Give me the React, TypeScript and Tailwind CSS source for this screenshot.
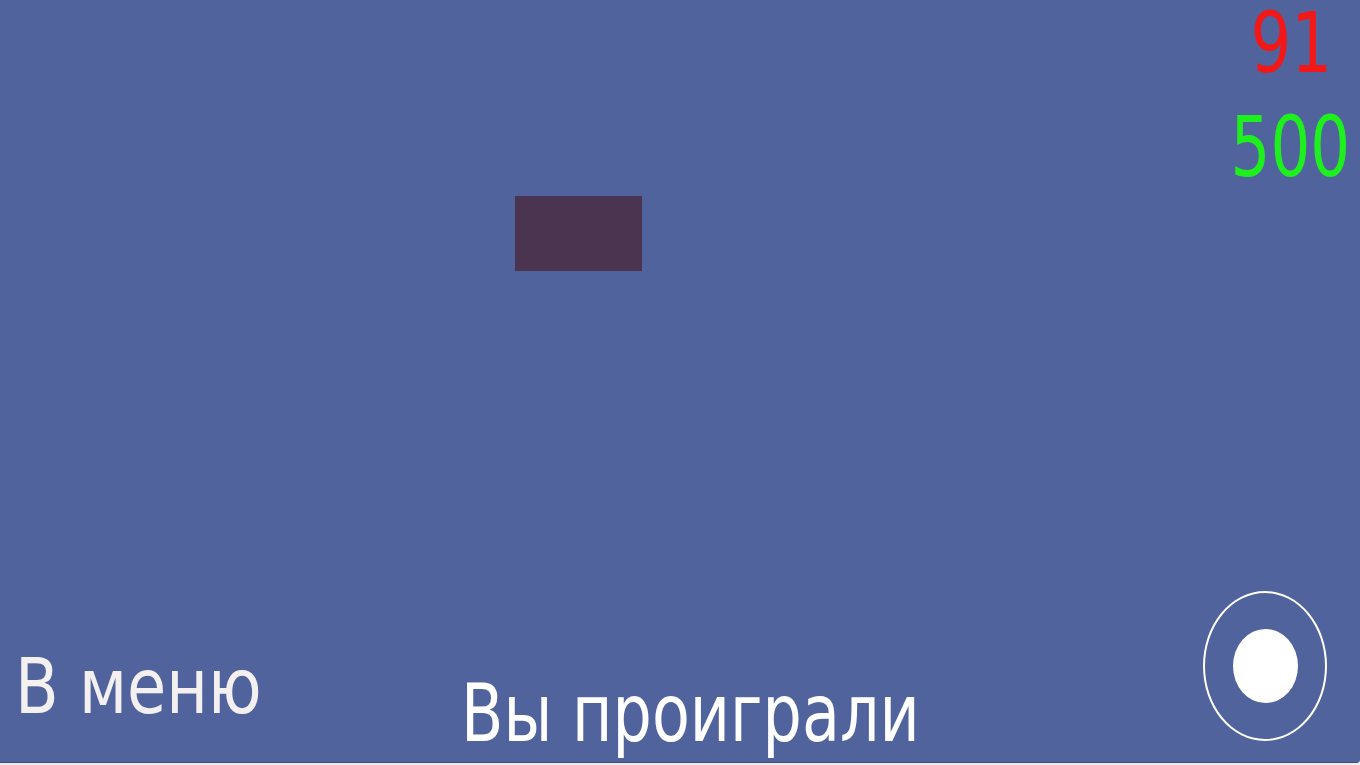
import React from "react";

const font = { fontFamily: '"DejaVu Sans Condensed", "DejaVu Sans", sans-serif' };

export default function App() {
  return (
    <div className="h-[765px] w-[1360px] bg-[#ececec] overflow-hidden" style={font}>
      <div className="relative h-[763px] bg-[#50639c] rounded-br-[4px] border-b border-[#3d4c78] flex flex-col">
        {/* scores */}
        <div className="flex justify-end pr-[10px] pt-[1px]">
          <div className="flex flex-col items-end leading-none">
            <span className="text-[84px] text-[#f21818] mr-[18px] scale-x-85 origin-right">91</span>
            <span className="text-[84px] text-[#1ef01e] mt-[20px] scale-x-83 origin-right">500</span>
          </div>
        </div>

        {/* enemy block */}
        <div className="absolute left-[515px] top-[196px] w-[127px] h-[75px] bg-[#4a3450]" />

        <div className="flex-1" />

        {/* bottom bar */}
        <div className="flex items-end pl-[15px] pr-[33px] pb-[21px]">
          <div className="w-[446px] shrink-0 mb-[16px]">
            <span className="block text-[77px] leading-none text-[#f4f0f0] scale-x-92 origin-left whitespace-nowrap">В меню</span>
          </div>
          <div className="flex-1 -mb-[13px]">
            <span className="block text-[81px] leading-none text-white scale-x-85 origin-left whitespace-nowrap">Вы проиграли</span>
          </div>
          <button className="w-[124px] h-[150px] rounded-[50%] border-[2px] border-white flex items-center justify-center">
            <span className="w-[65px] h-[74px] rounded-[50%] bg-white" />
          </button>
        </div>
      </div>
    </div>
  );
}
